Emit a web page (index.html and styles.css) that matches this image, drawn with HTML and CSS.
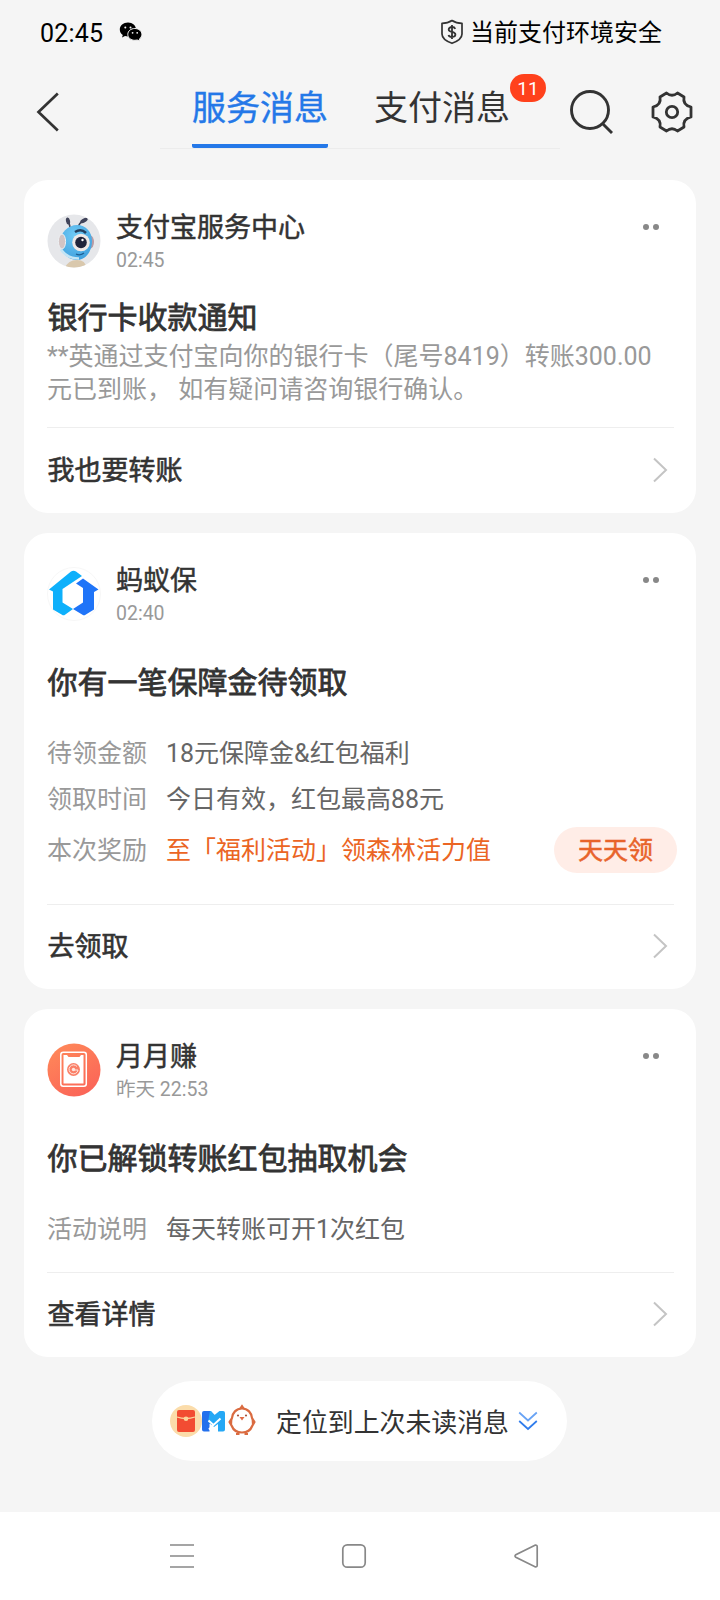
FILE: index.html
```html
<!DOCTYPE html>
<html lang="zh-CN">
<head>
<meta charset="utf-8">
<title>服务消息</title>
<link rel="stylesheet" href="styles.css">
</head>
<body>
<div class="screen">
  <header class="status">
    <span class="clock">02:45</span>
    <svg class="wechat" width="24" height="20" viewBox="0 0 24 20">
      <path d="M9 .5C4.300.5.8 3.600.8 7.400c0 2.300 1.200 4.200 3 5.500L3 15.500l3-1.500c1 .3 2 .4 3 .4 4.600 0 8-3.100 8-7S13.600.5 9 .5z"/>
      <path d="M15.800 6.500c-4 0-7 2.600-7 5.900s3 5.900 7 5.900c.9 0 1.700-.1 2.500-.3l2.600 1.300-.6-2.200c1.500-1.100 2.600-2.800 2.600-4.700 0-3.300-3.100-5.900-7.100-5.900z" stroke="#f5f5f5" stroke-width="1"/>
      <g fill="#f5f5f5"><circle cx="6.300" cy="5.500" r="1"/><circle cx="11.500" cy="5.500" r="1"/><circle cx="13.600" cy="10.800" r=".9"/><circle cx="18.200" cy="10.800" r=".9"/></g>
    </svg>
    <div class="safe">
      <svg width="24" height="26" viewBox="0 0 24 26" fill="none" stroke="#333">
        <path d="M12 1.500C9 3.500 5.500 4.300 2 4.300V15c0 4.500 4.500 7.300 10 9.300 5.500-2 10-4.800 10-9.300V4.300c-3.500 0-7-.8-10-2.800z" stroke-width="1.700" stroke-linejoin="round"/>
        <path d="M15.300 9.800C14.800 8.600 13.600 8 12 8c-1.900 0-3.300.9-3.300 2.400 0 3.500 6.700 1.600 6.700 5.200 0 1.500-1.500 2.400-3.400 2.400-1.800 0-3.100-.7-3.500-2M12 6v14" stroke-width="1.800"/>
      </svg>
      <span>当前支付环境安全</span>
    </div>
  </header>

  <nav class="topbar">
    <svg class="back" width="28" height="42" viewBox="0 0 28 42" fill="none" stroke="#333" stroke-width="2.700"><path d="M25.800 2.500 6.500 21l19.300 18.500"/></svg>
    <div class="tabs">
      <div class="tab active">服务消息</div>
      <div class="tab">支付消息<span class="badge">11</span></div>
    </div>
    <svg class="search" width="46" height="46" viewBox="0 0 46 46" fill="none" stroke="#333" stroke-width="2.900"><circle cx="22" cy="22" r="18.500"/><path d="m34 35 10 10"/></svg>
    <svg class="gear" width="54" height="54" viewBox="0 0 54 54" fill="none" stroke="#333" stroke-width="2.800" stroke-linejoin="round"><path d="M21.500 8Q27 12.500 32.500 8L39 12Q37.500 20 46 22V32Q37.500 34 39 42L32.500 46Q27 41.500 21.500 46L15 42Q16.500 34 8 32V22Q16.500 20 15 12Z"/><circle cx="27" cy="27" r="5.700"/></svg>
  </nav>

  <main class="cards">
    <article class="card card-transfer">
      <div class="head">
        <svg class="avatar" width="54" height="54" viewBox="0 0 54 54">
          <defs>
            <clipPath id="disc"><circle cx="27" cy="27" r="26.500"/></clipPath>
            <radialGradient id="skin" cx=".45" cy=".3" r=".75"><stop offset="0" stop-color="#70caf5"/><stop offset="1" stop-color="#3e9fdd"/></radialGradient>
          </defs>
          <g clip-path="url(#disc)">
            <rect width="54" height="54" fill="#e6e7ea"/>
            <path d="M23 13 21.500 7M31 14q1-5 5-7" stroke="#404357" stroke-width="1.600" fill="none"/>
            <ellipse cx="21" cy="7" rx="2" ry="3.600" fill="#41445a" transform="rotate(-12 21 7)"/><ellipse cx="37" cy="6.500" rx="2" ry="4" fill="#41445a" transform="rotate(62 37 6.500)"/>
            <path d="M18 54q3-8 12-8t9 8z" fill="#d9c8ad"/>
            <ellipse cx="43.500" cy="28" rx="3.500" ry="6.500" fill="#b79ba5"/>
            <path d="M30 11c9 0 15 7 15 16 0 10-6 19-15 19-9 0-17-8-17-18 0-9 8-17 17-17z" fill="url(#skin)"/>
            <ellipse cx="15" cy="27.500" rx="3.600" ry="7.500" fill="#d2c4c4" stroke="#eceff2"/>
            <path d="M14 35.500q6 9 18 9" stroke="#c4e5f5" stroke-width="2.600" fill="none"/>
            <path d="M28 18q6-4 11 1" stroke="#24405f" stroke-width="2.500" fill="none"/>
            <circle cx="34" cy="28.500" r="8.800" fill="#efe9e7"/><circle cx="34" cy="28.500" r="5.800" fill="#20253c"/><circle cx="35.500" cy="26" r="1.200" fill="#fff"/>
            <path d="M29 40q4 2 8-1" stroke="#1e5e92" stroke-width="1.300" fill="none"/>
          </g>
        </svg>
        <div class="who"><div class="name">支付宝服务中心</div><div class="time">02:45</div></div>
        <div class="more"><i></i><i></i></div>
      </div>
      <h2 class="title">银行卡收款通知</h2>
      <p class="text">**英通过支付宝向你的银行卡（尾号8419）转账300.00<br>元已到账， 如有疑问请咨询银行确认。</p>
      <div class="foot"><span>我也要转账</span><svg width="18" height="28" viewBox="0 0 18 28"><path d="m3 2.500 12 11.500L3 25.500"/></svg></div>
    </article>

    <article class="card card-insure">
      <div class="head">
        <svg class="avatar" width="54" height="54" viewBox="0 0 54 54">
          <circle cx="27" cy="27" r="26.500" fill="#fff" stroke="#f7f7f7"/>
          <path d="M24 4.500q2.500-1.500 5 0l6 4.500L15.500 22v13.500L26 42l-8 5.700q-1.500 1-3 0L6 42.500V24.500L2 22.500z" fill="#0eb0fb"/>
          <path d="m36 11.500 15.500 11-4.500 2.500v17.500l-8.500 5.200q-1.500 1-3 0L26 42l10-6.500V21L29 16.500z" fill="#1f74f8"/>
        </svg>
        <div class="who"><div class="name">蚂蚁保</div><div class="time">02:40</div></div>
        <div class="more"><i></i><i></i></div>
      </div>
      <h2 class="title">你有一笔保障金待领取</h2>
      <dl class="rows">
        <div class="row"><dt>待领金额</dt><dd>18元保障金&amp;红包福利</dd></div>
        <div class="row"><dt>领取时间</dt><dd>今日有效，红包最高88元</dd></div>
        <div class="row reward"><dt>本次奖励</dt><dd class="hot">至「福利活动」领森林活力值</dd><span class="claim">天天领</span></div>
      </dl>
      <div class="foot"><span>去领取</span><svg width="18" height="28" viewBox="0 0 18 28"><path d="m3 2.500 12 11.500L3 25.500"/></svg></div>
    </article>

    <article class="card card-earn">
      <div class="head">
        <svg class="avatar" width="54" height="54" viewBox="0 0 54 54">
          <defs><linearGradient id="coral" x1="0" y1="0" x2=".6" y2="1"><stop offset="0" stop-color="#ff8b59"/><stop offset="1" stop-color="#fb6658"/></linearGradient></defs>
          <circle cx="27" cy="27" r="26.500" fill="url(#coral)"/>
          <rect x="13.800" y="9.300" width="25.500" height="34" rx="2.500" fill="none" stroke="#fff" stroke-width="1.500"/>
          <path d="M16.500 12h3.500l1.500 2h11l1.500-2h2.500v28.500h-20z" fill="#fff"/>
          <circle cx="26.500" cy="26.500" r="6.500" fill="#fa8068"/>
          <path d="M30 23.500a4.500 4.500 0 1 0 1 3.500h-4" fill="none" stroke="#ffe5dd" stroke-width="1"/>
          <circle cx="26.500" cy="26.500" r="1.700" fill="#ffe5dd"/>
        </svg>
        <div class="who"><div class="name">月月赚</div><div class="time">昨天 22:53</div></div>
        <div class="more"><i></i><i></i></div>
      </div>
      <h2 class="title">你已解锁转账红包抽取机会</h2>
      <dl class="rows">
        <div class="row"><dt>活动说明</dt><dd>每天转账可开1次红包</dd></div>
      </dl>
      <div class="foot"><span>查看详情</span><svg width="18" height="28" viewBox="0 0 18 28"><path d="m3 2.500 12 11.500L3 25.500"/></svg></div>
    </article>
  </main>

  <div class="locate">
    <svg class="trio" width="86" height="34" viewBox="0 0 86 34">
      <circle cx="16" cy="17" r="16" fill="#fbdcaa"/>
      <rect x="7" y="6" width="18" height="22" rx="2" fill="#f24c32"/>
      <path d="M7 13q9 3 18 0" stroke="#fbd59d" stroke-width="1.300" fill="none"/><circle cx="16" cy="14.800" r="2.300" fill="#fbd59d"/>
      <path d="M32 9q0-2 2-2h6.500l4 4-1 5.500-4 3.500v7.500H34q-2 0-2-2z" fill="#2370ed"/>
      <path d="M40 7h1l3.500 4 5-4H53q2 0 2 2v16.500q0 2-2 2h-5V20l-4 3-6-5z" fill="#25a8f5"/>
      <path d="m38.500 16.500 5 4.500 7-6.500M43.500 21 39 25.500" stroke="#fff" stroke-width="2" fill="none"/>
      <path d="M72 4.500c-6 0-9.500 4.500-10 9.500l-2.500 4 2.300 4c1.500 4 5.500 6.500 10.200 6.500s8.700-2.500 10.200-6.500l2.300-4-2.500-4c-.5-5-4-9.500-10-9.500z" fill="#fff" stroke="#da6b40" stroke-width="2.200" stroke-linejoin="round"/>
      <path d="M70.300 4.500 72 2l1.700 2.500M68.500 28.500V30H66M75.500 28.500V30H78" fill="none" stroke="#da6b40" stroke-width="2"/>
      <path d="M62.500 14 59.500 18l2.500 4zM81.500 14l3 4-2.500 4z" fill="#da6b40"/>
      <circle cx="68" cy="11.500" r="1.100" fill="#a75440"/><circle cx="76" cy="11.500" r="1.100" fill="#a75440"/><path d="M69.500 13h5L72 16.500z" fill="#e26a45"/>
    </svg>
    <span>定位到上次未读消息</span>
    <svg class="down" width="20" height="20" viewBox="0 0 20 20" fill="none" stroke-width="1.700"><path d="m1.200 1.500 8.800 8 8.800-8" stroke="#68a3f5"/><path d="m1.200 10 8.800 8 8.800-8" stroke="#2f7cec"/></svg>
  </div>

  <footer class="sysnav">
    <svg width="26" height="26" viewBox="0 0 26 26"><path d="M1 2h24M1 13h24M1 24h24"/></svg>
    <svg width="26" height="26" viewBox="0 0 26 26"><rect x="1.800" y="1.800" width="22.400" height="22.400" rx="4.500"/></svg>
    <svg width="26" height="26" viewBox="0 0 26 26"><path d="M22 2.200 2.800 11.800q-1.600 1.200 0 2.400L22 23.800q2.200.5 2.200-1.600V3.800Q24.200 1.700 22 2.200z"/></svg>
  </footer>
</div>
</body>
</html>
```
FILE: styles.css
```css
* { box-sizing: border-box; }

body {
  margin: 0;
  background: #f5f5f5;
  color: #333;
  font-family: Roboto, "Noto Sans CJK SC", sans-serif;
}

svg { display: block; flex: none; }

.screen {
  display: flex;
  flex-direction: column;
  width: 720px;
  height: 1600px;
  overflow: hidden;
  white-space: nowrap;
}

.status {
  display: flex;
  align-items: center;
  height: 64px;
  padding: 0 58px 0 40px;
  color: #000;
}
.clock { width: 79px; padding-top: 3px; font-size: 25px; line-height: 30px; letter-spacing: 0.2px; }
.safe {
  display: flex;
  align-items: center;
  gap: 6px;
  margin-left: auto;
  font-size: 24px;
  line-height: 30px;
}
.safe span { padding-top: 2px; }

.topbar {
  display: flex;
  align-items: flex-start;
  height: 116px;
  padding-left: 32px;
}
.back { margin-top: 27px; }
.tabs {
  display: flex;
  gap: 46px;
  width: 400px;
  height: 85px;
  margin-left: 100px;
  padding-left: 32px;
  border-bottom: 1px solid #ececec;
}
.tab {
  position: relative;
  width: 136px;
  height: 84px;
  padding-top: 20px;
  font-size: 34px;
  line-height: 49px;
}
.active {
  color: #2478e8;
  border-bottom: 4px solid #2478e8;
  border-radius: 2px;
  -webkit-text-stroke: 0.4px #2478e8;
}
.badge {
  position: absolute;
  left: 136px;
  top: 10px;
  width: 36px;
  height: 28px;
  border-radius: 14px;
  background: #ff411c;
  color: #fff;
  font-size: 19px;
  line-height: 29px;
  text-align: center;
}
.search { margin: 24px 0 0 8px; }
.gear { margin: 21px 0 0 31px; }

.cards {
  display: flex;
  flex-direction: column;
  gap: 20px;
  padding: 0 24px;
}
.card {
  display: flex;
  flex-direction: column;
  padding: 0 22px 0 23px;
  border-radius: 24px;
  background: #fff;
}
.card-transfer { height: 333px; }
.card-insure { height: 456px; }
.card-earn { height: 348px; }

.head {
  display: flex;
  align-items: flex-start;
  height: 94px;
}
.avatar { margin-top: 34px; }
.who { flex: 1; padding: 32px 0 0 15px; }
.name {
  font-size: 27px;
  line-height: 33px;
  -webkit-text-stroke: 0.5px #333;
}
.time { color: #999; font-size: 19.5px; line-height: 31px; }
.more { display: flex; gap: 4px; padding: 44px 15px 0 0; }
.more i { width: 6px; height: 6px; border-radius: 50%; background: #888; }

.title {
  margin: 36px 0 0;
  padding-left: 0.5px;
  font-size: 30px;
  font-weight: 400;
  line-height: 40px;
  -webkit-text-stroke: 0.8px #333;
}
.card-transfer .title { margin-top: 24px; }
.text {
  margin: 2px 0 0;
  color: #999;
  font-size: 25px;
  line-height: 33px;
}

.rows { margin: 27px 0 0; }
.row {
  display: flex;
  align-items: center;
  height: 46px;
  font-size: 25px;
  line-height: 46px;
}
.row dt { width: 119px; padding-top: 2px; color: #999; }
.row dd { flex: 1; margin: 0; padding-top: 2px; color: #666; }
.row .hot { color: #eb6524; }
.reward { margin: 5px -3px 0 0; }
.claim {
  width: 123px;
  height: 46px;
  border-radius: 23px;
  background: #ffede7;
  color: #e8632a;
  line-height: 47px;
  text-align: center;
  -webkit-text-stroke: 0.5px #e8632a;
}

.foot {
  display: flex;
  align-items: center;
  justify-content: space-between;
  height: 85px;
  margin-top: auto;
  padding-right: 5px;
  border-top: 1px solid #eee;
  font-size: 27px;
  line-height: 40px;
  -webkit-text-stroke: 0.6px #333;
}
.foot span { padding-left: 0.5px; }
.foot svg { margin-bottom: 2px; }
.card-transfer .foot { height: 86px; }
.foot path { fill: none; stroke: #c4c4c4; stroke-width: 2; }

.locate {
  display: flex;
  align-items: center;
  align-self: center;
  width: 415px;
  height: 80px;
  margin: 24px 1px 51px 0;
  padding-left: 18px;
  border-radius: 40px;
  background: #fff;
  font-size: 25.9px;
  line-height: 40px;
}
.locate span { padding-top: 3px; }
.trio { margin-right: 20px; }
.down { margin-left: 9px; }

.sysnav {
  display: flex;
  flex: 1;
  align-items: center;
  justify-content: space-between;
  padding: 0 181px 0 169px;
  background: #fff;
}
.sysnav path,
.sysnav rect { fill: none; stroke: #888; stroke-width: 1.7; }
```
